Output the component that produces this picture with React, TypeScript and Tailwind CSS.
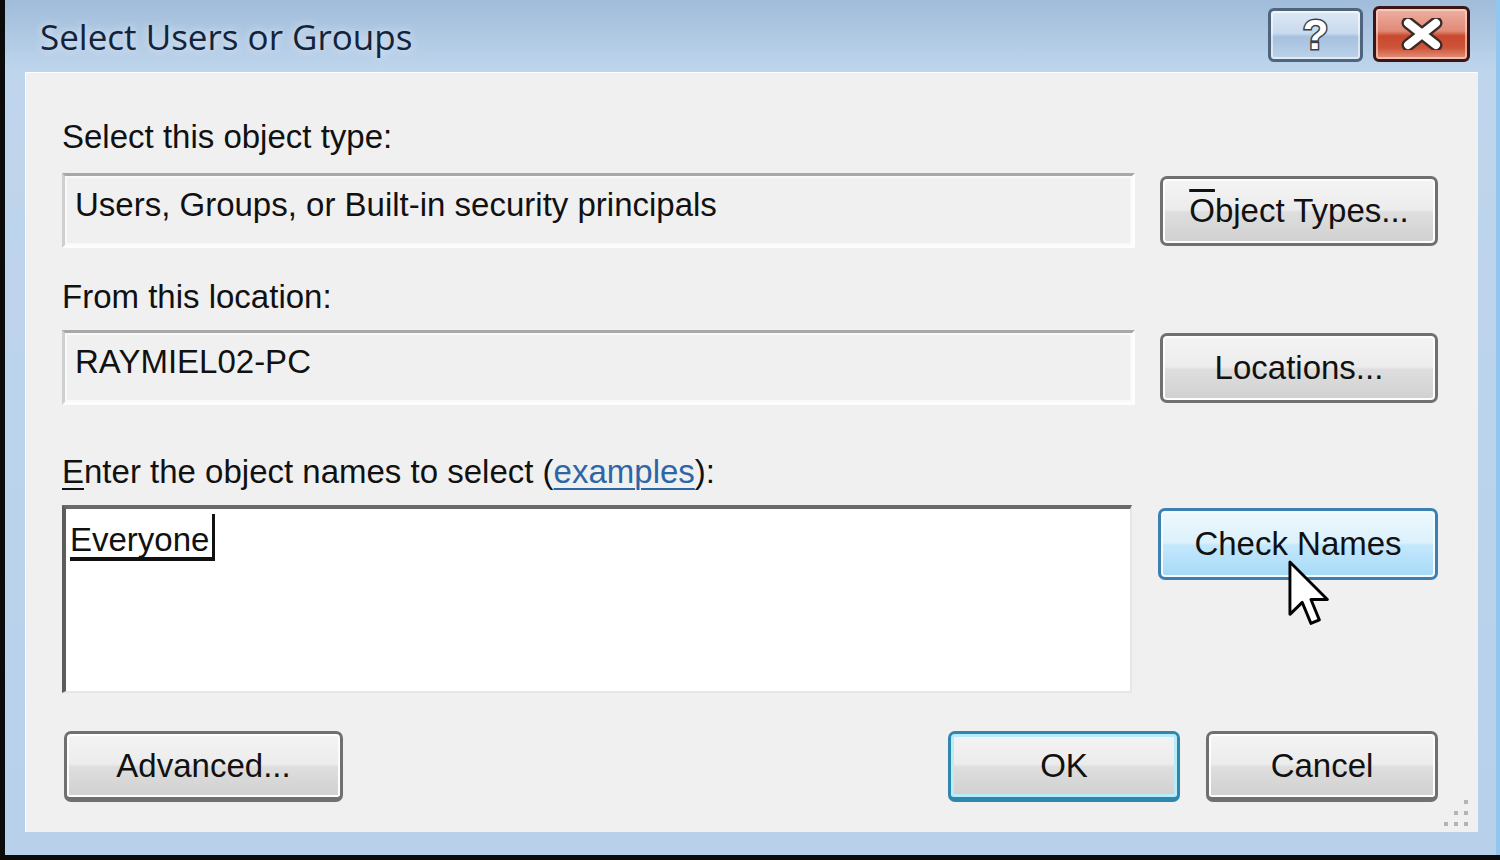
import React from 'react'

type BtnKind = 'normal' | 'hover' | 'default'

const Btn: React.FC<{ kind?: BtnKind; className?: string; children: React.ReactNode }> = ({
  kind = 'normal',
  className = '',
  children,
}) => {
  const look =
    kind === 'hover'
      ? 'border-[#3c7fb1] bg-[linear-gradient(180deg,#eef8fd_0%,#dcf1fc_48%,#c3e8fd_52%,#a6d9f6_100%)] shadow-[inset_0_0_0_2px_#f4fbfe]'
      : kind === 'default'
        ? 'border-[#2f87ac] bg-[linear-gradient(180deg,#f4f4f4_0%,#ececec_48%,#dedede_52%,#d0d0d0_100%)] shadow-[inset_0_0_0_3px_#b8ecfb]'
        : 'border-[#707070] bg-[linear-gradient(180deg,#f4f4f4_0%,#ececec_48%,#dedede_52%,#d0d0d0_100%)] shadow-[inset_0_0_0_2px_#fdfdfd]'
  return (
    <div
      className={`flex items-center justify-center rounded-[7px] border-[3px] text-[33px] text-[#111] ${look} ${className}`}
    >
      {children}
    </div>
  )
}

const ReadOnlyField: React.FC<{ text: string }> = ({ text }) => (
  <div className="h-[75px] flex-1 border-[3px] border-t-[#a8a8a8] border-l-[#cfcfcf] border-r-[#fdfdfd] border-b-[#fdfdfd] bg-[#f0f0f0] pl-[10px] pt-[9px] leading-[40px] shadow-[inset_0_0_0_2px_#f9f9f9]">
    {text}
  </div>
)

const TitleBar = () => (
  <div className="flex h-[72px] shrink-0 items-start justify-between">
    <div className="ml-[35px] mt-[17px] font-['Open_Sans',sans-serif] text-[35px] font-medium leading-[40px] text-[#14233a] [text-shadow:0_0_10px_rgba(255,255,255,0.7)]">
      Select Users or Groups
    </div>
    <div className="mr-[26px] mt-[6px] flex items-start gap-[10px]">
      {/* help */}
      <div className="mt-[2px] flex h-[54px] w-[95px] items-center justify-center rounded-[6px] border-[3px] border-[#4f657e] bg-[linear-gradient(180deg,#dde8f5_0%,#c8daee_46%,#a6c1de_54%,#bcd2ea_100%)] shadow-[inset_0_0_0_2px_rgba(255,255,255,0.55)]">
        <span className="font-['Liberation_Sans',Arial,sans-serif] text-[42px] font-bold leading-none text-white [-webkit-text-stroke:3px_#3a3f48] [paint-order:stroke_fill]">
          ?
        </span>
      </div>
      {/* close */}
      <div className="flex h-[56px] w-[97px] items-center justify-center rounded-[6px] border-[3px] border-[#3b1614] bg-[linear-gradient(180deg,#eeb0a2_0%,#e08a76_44%,#c8482e_54%,#cd5539_78%,#e49480_100%)] shadow-[inset_0_0_0_2px_rgba(255,220,210,0.6)]">
        <svg width="42" height="32" viewBox="0 0 42 32">
          <path d="M7 5 L35 27 M35 5 L7 27" stroke="#3a2a28" strokeWidth="13" strokeLinecap="round" />
          <path d="M7 5 L35 27 M35 5 L7 27" stroke="#ffffff" strokeWidth="8" strokeLinecap="round" />
        </svg>
      </div>
    </div>
  </div>
)

export default function App() {
  return (
    <div className="flex h-[860px] w-[1500px] bg-[#0b0b0b] pb-[5px] pl-[5px]">
      <div className="flex flex-1 flex-col border-r-[4px] border-r-[#93c6ef] bg-[linear-gradient(180deg,#a0bcda_0px,#bed5ec_70px,#b8d0ea_100%)]">
        <TitleBar />

        <div className="relative mb-[23px] ml-[20px] mr-[18px] flex flex-1 flex-col bg-[#f0f0f0] pl-[37px] pr-[40px] pt-[45px] font-['Liberation_Sans',Arial,sans-serif] text-[33px] text-[#111] shadow-[inset_1px_1px_0_#ffffff]">
          <div className="h-[40px] leading-[40px]">Select this object type:</div>
          <div className="mt-[16px] flex items-center gap-[25px]">
            <ReadOnlyField text="Users, Groups, or Built-in security principals" />
            <Btn className="h-[70px] w-[278px]">
              <span>
                <span className="overline decoration-[3px]">O</span>bject Types...
              </span>
            </Btn>
          </div>

          <div className="mt-[29px] h-[40px] leading-[40px]">From this location:</div>
          <div className="mt-[13px] flex items-center gap-[25px]">
            <ReadOnlyField text="RAYMIEL02-PC" />
            <Btn className="h-[70px] w-[278px]">Locations...</Btn>
          </div>

          <div className="mt-[47px] h-[40px] leading-[40px]">
            <span className="underline decoration-2 underline-offset-[5px]">E</span>nter the object names to select (
            <span className="text-[#2d66a6] underline decoration-2 underline-offset-[5px]">examples</span>):
          </div>
          <div className="mt-[13px] flex items-start gap-[26px]">
            <div className="h-[188px] w-[1070px] border-b-[2px] border-l-[4px] border-r-[2px] border-t-[4px] border-b-[#e6e6e6] border-l-[#5c5c5c] border-r-[#e6e6e6] border-t-[#6a6a6a] bg-white pl-[4px] pt-[5px]">
              <span className="inline-block border-b-[4px] border-r-[3px] border-[#111] pr-[3px] pt-[9px] leading-[34px]">
                Everyone
              </span>
            </div>
            <div className="relative w-[280px] pt-[3px]">
              <Btn kind="hover" className="h-[72px] w-[280px]">
                Check Names
              </Btn>
              {/* mouse pointer */}
              <svg
                className="absolute left-[130px] top-[55px]"
                width="42"
                height="68"
                viewBox="0 0 13 21"
              >
                <path
                  d="M0.6 0.6 L0.6 16.8 L4.4 13.1 L7.1 19.6 L9.7 18.5 L7.1 12.2 L12.2 12.2 Z"
                  fill="#ffffff"
                  stroke="#000000"
                  strokeWidth="0.9"
                  strokeLinejoin="round"
                />
              </svg>
            </div>
          </div>

          <div className="mt-[38px] flex items-start">
            <Btn className="ml-[2px] h-[71px] w-[279px] border-b-[5px]">Advanced...</Btn>
            <div className="flex-1" />
            <Btn kind="default" className="h-[71px] w-[232px] border-b-[5px]">
              OK
            </Btn>
            <Btn className="ml-[26px] h-[71px] w-[232px] border-b-[5px]">Cancel</Btn>
          </div>

          {/* resize grip */}
          <svg className="absolute bottom-[4px] right-[8px]" width="28" height="32" viewBox="0 0 28 32">
            {[
              [22, 4],
              [12, 15],
              [22, 15],
              [2, 26],
              [12, 26],
              [22, 26],
            ].map(([x, y]) => (
              <rect key={`${x}-${y}`} x={x} y={y} width="4" height="4" fill="#b4b4b4" />
            ))}
          </svg>
        </div>
      </div>
    </div>
  )
}
